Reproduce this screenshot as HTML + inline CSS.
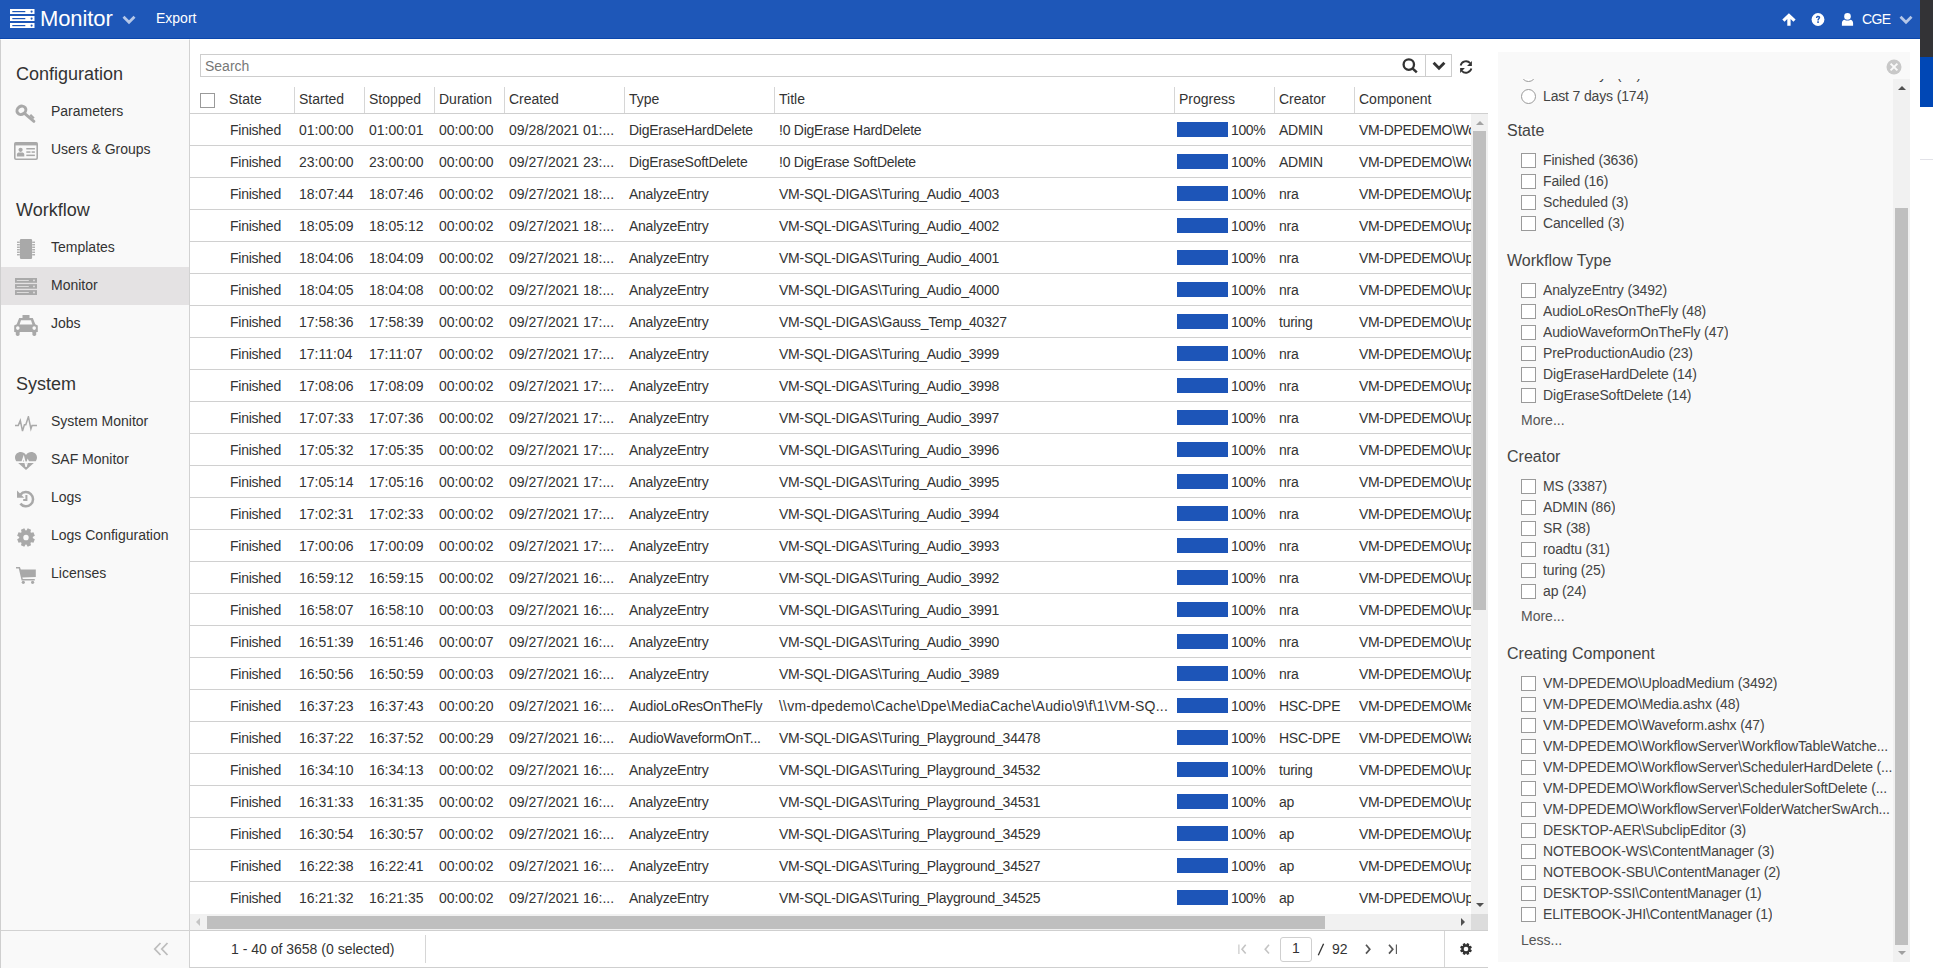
<!DOCTYPE html><html><head><meta charset="utf-8"><title>Monitor</title><style>
*{box-sizing:border-box}
html,body{margin:0;padding:0}
body{width:1933px;height:968px;overflow:hidden;position:relative;background:#fff;font-family:"Liberation Sans",sans-serif;color:#333;font-size:14px}
#hdr{position:absolute;left:0;top:0;width:1920px;height:39px;background:#1e57b8;border-bottom:1px solid #0b47ad}
#hdr .logo{position:absolute;left:10px;top:9px;width:25px;height:20px;line-height:0}
#hdr .apptitle{position:absolute;left:40px;top:7px;font-size:22px;line-height:24px;color:#fff;letter-spacing:-0.1px}
#hdr .appchev{position:absolute;left:122px;top:15px;line-height:0}
#hdr .export{position:absolute;left:156px;top:10px;font-size:14px;line-height:16px;color:#fff}
#hdr .hicon{position:absolute;top:12.5px;line-height:0}
#hdr .cge{position:absolute;left:1862px;top:11px;font-size:14px;line-height:16px;color:#fff;letter-spacing:-0.6px}
#hdr .userchev{position:absolute;left:1899px;top:15px;line-height:0}
#rstrip1{position:absolute;left:1920px;top:0;width:13px;height:57px;background:#333336}
#rstrip2{position:absolute;left:1920px;top:57px;width:13px;height:50px;background:#0047b5}
#rstrip3{position:absolute;left:1920px;top:159px;width:13px;height:1px;background:#e2e2e8}
#side{position:absolute;left:0;top:39px;width:190px;height:929px;background:#f9f9f9;border-left:1px solid #cfcfcf;border-right:1px solid #d2d2d2;border-top:1px solid #fff}
.t{position:absolute;white-space:nowrap}
.sh{color:#333}
.si{color:#333}
.sic{position:absolute;line-height:0}
.sic svg{display:block}
.sel{position:absolute;left:1px;width:188px;height:38px;background:#e4e2e3}
.sfoot{position:absolute;left:1px;top:930px;width:188px;height:1px;background:#d2d2d2}
.collapse{position:absolute;left:153px;top:942px;line-height:0}
#search{position:absolute;left:200px;top:54px;width:1252px;height:23px;border:1px solid #cdcdcd;background:#fff}
#search .ph{position:absolute;left:4px;top:3px;font-size:14px;line-height:16px;color:#777}
#search .sbtn{position:absolute;left:1201px;top:3px;line-height:0}
#search .ddbtn{position:absolute;left:1224px;top:-1px;width:27px;height:23px;border-left:1px solid #cdcdcd;line-height:0;padding:7px 0 0 6px}
#refresh{position:absolute;left:1459px;top:60px;line-height:0}
#thead{position:absolute;left:190px;top:82px;width:1298px;height:32px;border-bottom:1px solid #cfcfcf}
#thead .hcb{position:absolute;left:10px;top:11px;width:15px;height:15px;border:1px solid #9a9a9a;background:#fff}
#thead .hsep{position:absolute;top:5px;width:1px;height:26px;background:#d6d6d6}
#thead .hcell{position:absolute;top:9px;font-size:14px;line-height:16px;color:#333;white-space:nowrap}
#tbody{position:absolute;left:190px;top:114px;width:1281px;height:799px;overflow:hidden}
.tr{position:absolute;left:0;width:1281px;height:32px;border-bottom:1px solid #d0d0d0}
.tr .c{position:absolute;top:1px;line-height:31px;font-size:14px;white-space:nowrap;color:#333}
.tr .pb{position:absolute;left:987px;top:8px;width:51px;height:15px;background:#1d55b8}
#vscroll{position:absolute;left:1471px;top:114px;width:17px;height:800px;background:#f1f1f1}
#vscroll .vthumb{position:absolute;left:2px;top:17px;width:13px;height:479px;background:#bfbfbf}
#vscroll .vup{position:absolute;left:4.5px;top:7px;width:0;height:0;border-left:4px solid transparent;border-right:4px solid transparent;border-bottom:4px solid #a3a3a3}
#vscroll .vdn{position:absolute;left:4.5px;top:789px;width:0;height:0;border-left:4px solid transparent;border-right:4px solid transparent;border-top:4px solid #505050}
#hscroll{position:absolute;left:190px;top:914px;width:1281px;height:16px;background:#f1f1f1}
#hscroll .hthumb{position:absolute;left:17px;top:2px;width:1118px;height:13px;background:#bfbfbf}
#hscroll .hl{position:absolute;left:6px;top:4px;width:0;height:0;border-top:4px solid transparent;border-bottom:4px solid transparent;border-right:4px solid #c4c4c4}
#hscroll .hr{position:absolute;left:1271px;top:4px;width:0;height:0;border-top:4px solid transparent;border-bottom:4px solid transparent;border-left:4px solid #505050}
#corner{position:absolute;left:1471px;top:914px;width:17px;height:16px;background:#dcdcdc}
#foot{position:absolute;left:190px;top:930px;width:1298px;height:38px;border-top:1px solid #cfcfcf;border-bottom:1px solid #cfcfcf;background:#fff}
#foot .cnt{position:absolute;left:41px;top:10px;line-height:16px;font-size:14px;color:#333}
#foot .fsep1{position:absolute;left:235px;top:4px;width:1px;height:28px;background:#d6d6d6}
#foot .pg{position:absolute;left:1047px;top:12px;line-height:0}
#foot .pg2{position:absolute;left:1073px;top:12px;line-height:0}
#foot .pgin{position:absolute;left:1090px;top:6px;width:32px;height:25px;border:1px solid #cfcfcf;border-radius:3px;text-align:center;line-height:21px;font-size:14px;color:#333}
#foot .slash{position:absolute;left:1127px;top:12px;line-height:0}
#foot .tot{position:absolute;left:1142px;top:10px;line-height:16px;font-size:14px;color:#333}
#foot .pg3{position:absolute;left:1174px;top:12px;line-height:0}
#foot .pg4{position:absolute;left:1196px;top:12px;line-height:0}
#foot .fsep2{position:absolute;left:1254px;top:0;width:1px;height:36px;background:#d6d6d6}
#foot .fgear{position:absolute;left:1270px;top:12px;line-height:0}
#panel{position:absolute;left:1498px;top:52px;width:412px;height:910px;background:#f9f9f9}
#panel .pclose{position:absolute;left:387.5px;top:7px;line-height:0}
#panel .pscroll{position:absolute;left:395px;top:27px;width:17px;height:883px;background:#f1f1f1}
#panel .pthumb{position:absolute;left:2px;top:129px;width:13px;height:737px;background:#bfbfbf}
#panel .pup{position:absolute;left:4.5px;top:7px;width:0;height:0;border-left:4px solid transparent;border-right:4px solid transparent;border-bottom:4px solid #505050}
#panel .pdn{position:absolute;left:4.5px;top:872px;width:0;height:0;border-left:4px solid transparent;border-right:4px solid transparent;border-top:4px solid #a0a0a0}
#panel .pclip{position:absolute;left:0;top:27px;width:395px;height:882px;overflow:hidden}
.pclip .radio{position:absolute;left:23px;width:15px;height:15px;border:1px solid #9a9a9a;border-radius:50%;background:#fff;margin-top:-79px}
.pclip .cb{position:absolute;left:23px;width:15px;height:15px;border:1px solid #9a9a9a;background:#fff;margin-top:-79px}
.pclip .ptxt{position:absolute;left:45px;font-size:14px;line-height:16px;white-space:nowrap;color:#444;margin-top:-79px;max-width:350px;overflow:hidden;letter-spacing:-0.15px}
.pclip .ph2{position:absolute;left:9px;font-size:16px;line-height:18px;color:#444;margin-top:-79px}
.pclip .more{position:absolute;left:23px;font-size:14px;line-height:16px;color:#555;margin-top:-79px}

.tr .ls{letter-spacing:-0.25px}
.tr .lsp{letter-spacing:0.2px}
.tr .ls3{letter-spacing:-0.33px}

</style></head><body>
<div id="hdr">
<div class="logo"><svg width="25" height="20" viewBox="0 0 25 20"><g fill="#fff"><rect x="0" y="0" width="24.5" height="5"/><rect x="0" y="7" width="24.5" height="5"/><rect x="0" y="14" width="24.5" height="5"/></g><g fill="#1e57b8"><rect x="2.3" y="2" width="13" height="1.2"/><rect x="2.3" y="9" width="13" height="1.2"/><rect x="2.3" y="16" width="13" height="1.2"/><circle cx="21.6" cy="2.6" r="1.1"/><circle cx="21.6" cy="9.6" r="1.1"/><circle cx="21.6" cy="16.6" r="1.1"/></g></svg></div>
<div class="apptitle">Monitor</div>
<div class="appchev"><svg width="14" height="10" viewBox="0 0 14 10"><path d="M1.5 1.8 L7 7.2 L12.5 1.8" fill="none" stroke="#b5c7e8" stroke-width="2.8"/></svg></div>
<div class="export">Export</div>
<div class="hicon" style="left:1782px"><svg width="14" height="13" viewBox="0 0 14 13"><path d="M6.9 0.2 L13.6 6.6 L11.4 8.7 L8.6 6 L8.6 12.8 L5.3 12.8 L5.3 6 L2.5 8.7 L0.3 6.6 Z" fill="#fff"/></svg></div>
<div class="hicon" style="left:1811px"><svg width="14" height="13" viewBox="0 0 14 13"><circle cx="7" cy="6.5" r="6.4" fill="#fff"/><path d="M4.9 5 C4.9 3.4 6 2.8 7.1 2.8 C8.4 2.8 9.2 3.6 9.2 4.6 C9.2 5.9 7.8 6.1 7.8 7.4 L6.3 7.4 C6.3 5.8 7.6 5.6 7.6 4.7 C7.6 4.3 7.3 4.1 7 4.1 C6.6 4.1 6.4 4.4 6.4 5 Z" fill="#1e57b8"/><rect x="6.2" y="8.3" width="1.7" height="1.6" fill="#1e57b8"/></svg></div>
<div class="hicon" style="left:1841px"><svg width="13" height="13" viewBox="0 0 13 13"><circle cx="6.5" cy="3.4" r="3.3" fill="#fff"/><path d="M0.9 12.8 L0.9 9.9 C0.9 7.9 2.2 6.9 3.6 6.7 C4.4 7.3 5.3 7.6 6.5 7.6 C7.7 7.6 8.6 7.3 9.4 6.7 C10.8 6.9 12.1 7.9 12.1 9.9 L12.1 12.8 Z" fill="#fff"/></svg></div>
<div class="cge">CGE</div>
<div class="userchev"><svg width="14" height="10" viewBox="0 0 14 10"><path d="M1.5 1.8 L7 7.2 L12.5 1.8" fill="none" stroke="#b5c7e8" stroke-width="2.8"/></svg></div>
</div>
<div id="rstrip1"></div><div id="rstrip2"></div><div id="rstrip3"></div>
<div id="side"></div>
<div class="t sh" style="left:16px;top:62.76px;font-size:18px;line-height:22px;">Configuration</div>
<div class="sic" style="left:15px;top:104px;width:21px;height:19px"><svg width="100%" height="100%" viewBox="0 0 21 19"><g fill="none" stroke="#a9a9a9"><ellipse cx="6.4" cy="6.3" rx="4.6" ry="4" transform="rotate(-35 6.4 6.3)" stroke-width="3"/><path d="M9.8 9.6 L18.9 17.4" stroke-width="2.8" stroke-linecap="round"/><path d="M15.2 10.8 L18.8 14.3" stroke-width="2.4"/></g></svg></div>
<div class="t si" style="left:51px;top:102.65px;font-size:14px;line-height:17px;">Parameters</div>
<div class="sic" style="left:14px;top:142px;width:24px;height:18px"><svg width="100%" height="100%" viewBox="0 0 24 18"><rect x="0.8" y="0.8" width="22.4" height="16.4" rx="1.2" fill="none" stroke="#a9a9a9" stroke-width="1.6"/><rect x="0.8" y="0.6" width="22.4" height="2.8" fill="#a9a9a9"/><circle cx="6.6" cy="7.8" r="2.1" fill="#a9a9a9"/><path d="M2.9 14.4 L2.9 12.4 C2.9 11 4.2 10.4 5.1 10.4 L8.1 10.4 C9 10.4 10.3 11 10.3 12.4 L10.3 14.4 Z" fill="#a9a9a9"/><rect x="12.3" y="6" width="8.6" height="1.5" fill="#a9a9a9"/><rect x="12.3" y="9.3" width="4.2" height="1.5" fill="#a9a9a9"/><rect x="17.6" y="9.3" width="3.3" height="1.5" fill="#a9a9a9"/><rect x="12.3" y="12.6" width="8.6" height="1.5" fill="#a9a9a9"/></svg></div>
<div class="t si" style="left:51px;top:140.65px;font-size:14px;line-height:17px;">Users &amp; Groups</div>
<div class="t sh" style="left:16px;top:198.76px;font-size:18px;line-height:22px;">Workflow</div>
<div class="sic" style="left:17px;top:239px;width:18px;height:20px"><svg width="100%" height="100%" viewBox="0 0 18 20"><g fill="#a9a9a9"><rect x="2.9" y="0" width="12.2" height="20" rx="1.2"/><rect x="0" y="2.6" width="2.8" height="1.3"/><rect x="15.2" y="2.6" width="2.8" height="1.3"/><rect x="0" y="5.1" width="2.8" height="1.3"/><rect x="15.2" y="5.1" width="2.8" height="1.3"/><rect x="0" y="7.6" width="2.8" height="1.3"/><rect x="15.2" y="7.6" width="2.8" height="1.3"/><rect x="0" y="10.1" width="2.8" height="1.3"/><rect x="15.2" y="10.1" width="2.8" height="1.3"/><rect x="0" y="12.6" width="2.8" height="1.3"/><rect x="15.2" y="12.6" width="2.8" height="1.3"/><rect x="0" y="15.1" width="2.8" height="1.3"/><rect x="15.2" y="15.1" width="2.8" height="1.3"/></g></svg></div>
<div class="t si" style="left:51px;top:238.65px;font-size:14px;line-height:17px;">Templates</div>
<div class="sel" style="top:267px"></div>
<div class="sic" style="left:15px;top:278px;width:22px;height:17px"><svg width="100%" height="100%" viewBox="0 0 22 17"><g fill="#a9a9a9"><rect x="0" y="0" width="22" height="4.8"/><rect x="0" y="6.1" width="22" height="4.6"/><rect x="0" y="12.1" width="22" height="4.9"/></g><g fill="#e4e2e3"><rect x="1.8" y="2" width="12" height="0.9"/><rect x="1.8" y="8" width="12" height="0.9"/><rect x="1.8" y="14.1" width="12" height="0.9"/><circle cx="19" cy="2.4" r="0.9"/><circle cx="19" cy="8.4" r="0.9"/><circle cx="19" cy="14.5" r="0.9"/></g></svg></div>
<div class="t si" style="left:51px;top:276.65px;font-size:14px;line-height:17px;">Monitor</div>
<div class="sic" style="left:14px;top:315px;width:24px;height:21px"><svg width="100%" height="100%" viewBox="0 0 24 21"><g fill="#a9a9a9"><rect x="8.5" y="0" width="7" height="3.2"/><path d="M5.2 3 L18.8 3 L21.3 9.3 L23.8 10.5 L23.8 17 L0.2 17 L0.2 10.5 L2.7 9.3 Z"/><rect x="1.8" y="15.5" width="3.8" height="5.5" rx="1.7"/><rect x="18.4" y="15.5" width="3.8" height="5.5" rx="1.7"/></g><path d="M7 5.3 L17 5.3 L18.4 9.4 L5.6 9.4 Z" fill="#f9f9f9"/><circle cx="3.8" cy="13.1" r="1.8" fill="#f9f9f9"/><circle cx="20.2" cy="13.1" r="1.8" fill="#f9f9f9"/></svg></div>
<div class="t si" style="left:51px;top:314.65px;font-size:14px;line-height:17px;">Jobs</div>
<div class="t sh" style="left:16px;top:372.76px;font-size:18px;line-height:22px;">System</div>
<div class="sic" style="left:15px;top:416px;width:22px;height:16px"><svg width="100%" height="100%" viewBox="0 0 22 16"><path d="M0 9.4 L3.3 9.4 L5.3 4.5 L7.5 15 L9.4 8.8 L10.8 8.8 L13.4 0.7 L15.9 12.8 L17 9.4 L22 9.4" fill="none" stroke="#a9a9a9" stroke-width="1.5" stroke-linejoin="miter"/></svg></div>
<div class="t si" style="left:51px;top:412.65px;font-size:14px;line-height:17px;">System Monitor</div>
<div class="sic" style="left:15px;top:452px;width:22px;height:18px"><svg width="100%" height="100%" viewBox="0 0 22 18"><path d="M11 3 C9.6 0.8 7.7 0 5.8 0 C2.5 0 0 2.4 0 5.6 C0 7.1 0.6 8.3 1.4 9.5 L20.6 9.5 C21.4 8.3 22 7.1 22 5.6 C22 2.4 19.5 0 16.2 0 C14.3 0 12.4 0.8 11 3 Z" fill="#a9a9a9"/><path d="M3.2 11 L18.8 11 L11 18 Z" fill="#a9a9a9"/><path d="M0.5 10.3 L7 10.3 L8.7 5.2 L11.1 14.8 L12.8 8.4 L13.9 10.3 L21.5 10.3" fill="none" stroke="#f9f9f9" stroke-width="1.4"/></svg></div>
<div class="t si" style="left:51px;top:450.65px;font-size:14px;line-height:17px;">SAF Monitor</div>
<div class="sic" style="left:17px;top:490px;width:18px;height:18px"><svg width="100%" height="100%" viewBox="0 0 18 18"><path d="M3.5 4.6 A7.1 7.1 0 1 1 3.4 13.6" fill="none" stroke="#a9a9a9" stroke-width="2.5"/><path d="M0 0.6 L0 7.8 L7.2 7.8 Z" fill="#a9a9a9"/><path d="M9.4 5 L9.4 10 L6.2 10" fill="none" stroke="#a9a9a9" stroke-width="2"/></svg></div>
<div class="t si" style="left:51px;top:488.65px;font-size:14px;line-height:17px;">Logs</div>
<div class="sic" style="left:17px;top:528px;width:18px;height:19px"><svg width="100%" height="100%" viewBox="0 0 18 18" preserveAspectRatio="none"><polygon points="15.65,9.42 17.83,10.72 16.46,14.03 14.00,13.41 13.41,14.00 14.03,16.46 10.72,17.83 9.42,15.65 8.58,15.65 7.28,17.83 3.97,16.46 4.59,14.00 4.00,13.41 1.54,14.03 0.17,10.72 2.35,9.42 2.35,8.58 0.17,7.28 1.54,3.97 4.00,4.59 4.59,4.00 3.97,1.54 7.28,0.17 8.58,2.35 9.42,2.35 10.72,0.17 14.03,1.54 13.41,4.00 14.00,4.59 16.46,3.97 17.83,7.28 15.65,8.58" fill="#a9a9a9"/><circle cx="9.0" cy="9.0" r="6.48" fill="#a9a9a9"/><circle cx="9.0" cy="9.0" r="2.70" fill="#f9f9f9"/></svg></div>
<div class="t si" style="left:51px;top:526.65px;font-size:14px;line-height:17px;">Logs Configuration</div>
<div class="sic" style="left:16px;top:567px;width:20px;height:17px"><svg width="100%" height="100%" viewBox="0 0 20 17"><g fill="#a9a9a9"><path d="M0 0 L3.9 0 L4.8 2.6 L19.8 2.6 L19.8 10 L6.3 10.6 L6.8 12 L18.8 12 L18.8 13.4 L5.6 13.4 L2.8 1.5 L0 1.5 Z"/><circle cx="7.3" cy="15.3" r="1.6"/><circle cx="16.6" cy="15.3" r="1.6"/></g></svg></div>
<div class="t si" style="left:51px;top:564.65px;font-size:14px;line-height:17px;">Licenses</div>
<div class="sfoot"></div><div class="collapse"><svg width="16" height="14" viewBox="0 0 16 14"><path d="M7.5 1 L1.8 7 L7.5 13 M14.5 1 L8.8 7 L14.5 13" fill="none" stroke="#bdbdbd" stroke-width="1.8"/></svg></div>
<div id="main">
<div id="search"><span class="ph">Search</span><div class="sbtn"><svg width="17" height="17" viewBox="0 0 17 17"><circle cx="6.8" cy="6.6" r="5.2" fill="none" stroke="#333" stroke-width="2.3"/><path d="M10.5 10.4 L14.8 14.4" stroke="#333" stroke-width="2.5"/></svg></div><div class="ddbtn"><svg width="14" height="10" viewBox="0 0 14 10"><path d="M1.6 1.8 L7 7.2 L12.4 1.8" fill="none" stroke="#333" stroke-width="2.9"/></svg></div></div>
<div id="refresh"><svg width="14" height="14" viewBox="0 0 14 14"><path d="M1.6 5.4 A5.6 5.6 0 0 1 11.2 3.2" fill="none" stroke="#333" stroke-width="1.8"/><path d="M12.9 1 L12.9 5.9 L8.1 5.9 Z" fill="#333"/><path d="M12.4 8.6 A5.6 5.6 0 0 1 2.8 10.8" fill="none" stroke="#333" stroke-width="1.8"/><path d="M1.1 13 L1.1 8.1 L5.9 8.1 Z" fill="#333"/></svg></div>
<div id="thead">
<div class="hcb"></div>
<div class="hcell" style="left:39px">State</div>
<div class="hsep" style="left:104px"></div>
<div class="hcell" style="left:109px">Started</div>
<div class="hsep" style="left:174px"></div>
<div class="hcell" style="left:179px">Stopped</div>
<div class="hsep" style="left:244px"></div>
<div class="hcell" style="left:249px">Duration</div>
<div class="hsep" style="left:314px"></div>
<div class="hcell" style="left:319px">Created</div>
<div class="hsep" style="left:434px"></div>
<div class="hcell" style="left:439px">Type</div>
<div class="hsep" style="left:584px"></div>
<div class="hcell" style="left:589px">Title</div>
<div class="hsep" style="left:984px"></div>
<div class="hcell" style="left:989px">Progress</div>
<div class="hsep" style="left:1084px"></div>
<div class="hcell" style="left:1089px">Creator</div>
<div class="hsep" style="left:1164px"></div>
<div class="hcell" style="left:1169px">Component</div>
</div>
<div id="tbody">
<div class="tr" style="top:0px">
<span class="c ls" style="left:40px">Finished</span>
<span class="c" style="left:109px">01:00:00</span>
<span class="c" style="left:179px">01:00:01</span>
<span class="c" style="left:249px">00:00:00</span>
<span class="c" style="left:319px">09/28/2021 01:...</span>
<span class="c ls" style="left:439px">DigEraseHardDelete</span>
<span class="c ls" style="left:589px">!0 DigErase HardDelete</span>
<span class="pb"></span><span class="c" style="left:1041px;letter-spacing:-0.4px">100%</span>
<span class="c ls" style="left:1089px">ADMIN</span>
<span class="c comp ls3" style="left:1169px">VM-DPEDEMO\Wo</span>
</div>
<div class="tr" style="top:32px">
<span class="c ls" style="left:40px">Finished</span>
<span class="c" style="left:109px">23:00:00</span>
<span class="c" style="left:179px">23:00:00</span>
<span class="c" style="left:249px">00:00:00</span>
<span class="c" style="left:319px">09/27/2021 23:...</span>
<span class="c ls" style="left:439px">DigEraseSoftDelete</span>
<span class="c ls" style="left:589px">!0 DigErase SoftDelete</span>
<span class="pb"></span><span class="c" style="left:1041px;letter-spacing:-0.4px">100%</span>
<span class="c ls" style="left:1089px">ADMIN</span>
<span class="c comp ls3" style="left:1169px">VM-DPEDEMO\Wo</span>
</div>
<div class="tr" style="top:64px">
<span class="c ls" style="left:40px">Finished</span>
<span class="c" style="left:109px">18:07:44</span>
<span class="c" style="left:179px">18:07:46</span>
<span class="c" style="left:249px">00:00:02</span>
<span class="c" style="left:319px">09/27/2021 18:...</span>
<span class="c ls" style="left:439px">AnalyzeEntry</span>
<span class="c ls" style="left:589px">VM-SQL-DIGAS\Turing_Audio_4003</span>
<span class="pb"></span><span class="c" style="left:1041px;letter-spacing:-0.4px">100%</span>
<span class="c ls" style="left:1089px">nra</span>
<span class="c comp ls3" style="left:1169px">VM-DPEDEMO\Up</span>
</div>
<div class="tr" style="top:96px">
<span class="c ls" style="left:40px">Finished</span>
<span class="c" style="left:109px">18:05:09</span>
<span class="c" style="left:179px">18:05:12</span>
<span class="c" style="left:249px">00:00:02</span>
<span class="c" style="left:319px">09/27/2021 18:...</span>
<span class="c ls" style="left:439px">AnalyzeEntry</span>
<span class="c ls" style="left:589px">VM-SQL-DIGAS\Turing_Audio_4002</span>
<span class="pb"></span><span class="c" style="left:1041px;letter-spacing:-0.4px">100%</span>
<span class="c ls" style="left:1089px">nra</span>
<span class="c comp ls3" style="left:1169px">VM-DPEDEMO\Up</span>
</div>
<div class="tr" style="top:128px">
<span class="c ls" style="left:40px">Finished</span>
<span class="c" style="left:109px">18:04:06</span>
<span class="c" style="left:179px">18:04:09</span>
<span class="c" style="left:249px">00:00:02</span>
<span class="c" style="left:319px">09/27/2021 18:...</span>
<span class="c ls" style="left:439px">AnalyzeEntry</span>
<span class="c ls" style="left:589px">VM-SQL-DIGAS\Turing_Audio_4001</span>
<span class="pb"></span><span class="c" style="left:1041px;letter-spacing:-0.4px">100%</span>
<span class="c ls" style="left:1089px">nra</span>
<span class="c comp ls3" style="left:1169px">VM-DPEDEMO\Up</span>
</div>
<div class="tr" style="top:160px">
<span class="c ls" style="left:40px">Finished</span>
<span class="c" style="left:109px">18:04:05</span>
<span class="c" style="left:179px">18:04:08</span>
<span class="c" style="left:249px">00:00:02</span>
<span class="c" style="left:319px">09/27/2021 18:...</span>
<span class="c ls" style="left:439px">AnalyzeEntry</span>
<span class="c ls" style="left:589px">VM-SQL-DIGAS\Turing_Audio_4000</span>
<span class="pb"></span><span class="c" style="left:1041px;letter-spacing:-0.4px">100%</span>
<span class="c ls" style="left:1089px">nra</span>
<span class="c comp ls3" style="left:1169px">VM-DPEDEMO\Up</span>
</div>
<div class="tr" style="top:192px">
<span class="c ls" style="left:40px">Finished</span>
<span class="c" style="left:109px">17:58:36</span>
<span class="c" style="left:179px">17:58:39</span>
<span class="c" style="left:249px">00:00:02</span>
<span class="c" style="left:319px">09/27/2021 17:...</span>
<span class="c ls" style="left:439px">AnalyzeEntry</span>
<span class="c ls" style="left:589px">VM-SQL-DIGAS\Gauss_Temp_40327</span>
<span class="pb"></span><span class="c" style="left:1041px;letter-spacing:-0.4px">100%</span>
<span class="c ls" style="left:1089px">turing</span>
<span class="c comp ls3" style="left:1169px">VM-DPEDEMO\Up</span>
</div>
<div class="tr" style="top:224px">
<span class="c ls" style="left:40px">Finished</span>
<span class="c" style="left:109px">17:11:04</span>
<span class="c" style="left:179px">17:11:07</span>
<span class="c" style="left:249px">00:00:02</span>
<span class="c" style="left:319px">09/27/2021 17:...</span>
<span class="c ls" style="left:439px">AnalyzeEntry</span>
<span class="c ls" style="left:589px">VM-SQL-DIGAS\Turing_Audio_3999</span>
<span class="pb"></span><span class="c" style="left:1041px;letter-spacing:-0.4px">100%</span>
<span class="c ls" style="left:1089px">nra</span>
<span class="c comp ls3" style="left:1169px">VM-DPEDEMO\Up</span>
</div>
<div class="tr" style="top:256px">
<span class="c ls" style="left:40px">Finished</span>
<span class="c" style="left:109px">17:08:06</span>
<span class="c" style="left:179px">17:08:09</span>
<span class="c" style="left:249px">00:00:02</span>
<span class="c" style="left:319px">09/27/2021 17:...</span>
<span class="c ls" style="left:439px">AnalyzeEntry</span>
<span class="c ls" style="left:589px">VM-SQL-DIGAS\Turing_Audio_3998</span>
<span class="pb"></span><span class="c" style="left:1041px;letter-spacing:-0.4px">100%</span>
<span class="c ls" style="left:1089px">nra</span>
<span class="c comp ls3" style="left:1169px">VM-DPEDEMO\Up</span>
</div>
<div class="tr" style="top:288px">
<span class="c ls" style="left:40px">Finished</span>
<span class="c" style="left:109px">17:07:33</span>
<span class="c" style="left:179px">17:07:36</span>
<span class="c" style="left:249px">00:00:02</span>
<span class="c" style="left:319px">09/27/2021 17:...</span>
<span class="c ls" style="left:439px">AnalyzeEntry</span>
<span class="c ls" style="left:589px">VM-SQL-DIGAS\Turing_Audio_3997</span>
<span class="pb"></span><span class="c" style="left:1041px;letter-spacing:-0.4px">100%</span>
<span class="c ls" style="left:1089px">nra</span>
<span class="c comp ls3" style="left:1169px">VM-DPEDEMO\Up</span>
</div>
<div class="tr" style="top:320px">
<span class="c ls" style="left:40px">Finished</span>
<span class="c" style="left:109px">17:05:32</span>
<span class="c" style="left:179px">17:05:35</span>
<span class="c" style="left:249px">00:00:02</span>
<span class="c" style="left:319px">09/27/2021 17:...</span>
<span class="c ls" style="left:439px">AnalyzeEntry</span>
<span class="c ls" style="left:589px">VM-SQL-DIGAS\Turing_Audio_3996</span>
<span class="pb"></span><span class="c" style="left:1041px;letter-spacing:-0.4px">100%</span>
<span class="c ls" style="left:1089px">nra</span>
<span class="c comp ls3" style="left:1169px">VM-DPEDEMO\Up</span>
</div>
<div class="tr" style="top:352px">
<span class="c ls" style="left:40px">Finished</span>
<span class="c" style="left:109px">17:05:14</span>
<span class="c" style="left:179px">17:05:16</span>
<span class="c" style="left:249px">00:00:02</span>
<span class="c" style="left:319px">09/27/2021 17:...</span>
<span class="c ls" style="left:439px">AnalyzeEntry</span>
<span class="c ls" style="left:589px">VM-SQL-DIGAS\Turing_Audio_3995</span>
<span class="pb"></span><span class="c" style="left:1041px;letter-spacing:-0.4px">100%</span>
<span class="c ls" style="left:1089px">nra</span>
<span class="c comp ls3" style="left:1169px">VM-DPEDEMO\Up</span>
</div>
<div class="tr" style="top:384px">
<span class="c ls" style="left:40px">Finished</span>
<span class="c" style="left:109px">17:02:31</span>
<span class="c" style="left:179px">17:02:33</span>
<span class="c" style="left:249px">00:00:02</span>
<span class="c" style="left:319px">09/27/2021 17:...</span>
<span class="c ls" style="left:439px">AnalyzeEntry</span>
<span class="c ls" style="left:589px">VM-SQL-DIGAS\Turing_Audio_3994</span>
<span class="pb"></span><span class="c" style="left:1041px;letter-spacing:-0.4px">100%</span>
<span class="c ls" style="left:1089px">nra</span>
<span class="c comp ls3" style="left:1169px">VM-DPEDEMO\Up</span>
</div>
<div class="tr" style="top:416px">
<span class="c ls" style="left:40px">Finished</span>
<span class="c" style="left:109px">17:00:06</span>
<span class="c" style="left:179px">17:00:09</span>
<span class="c" style="left:249px">00:00:02</span>
<span class="c" style="left:319px">09/27/2021 17:...</span>
<span class="c ls" style="left:439px">AnalyzeEntry</span>
<span class="c ls" style="left:589px">VM-SQL-DIGAS\Turing_Audio_3993</span>
<span class="pb"></span><span class="c" style="left:1041px;letter-spacing:-0.4px">100%</span>
<span class="c ls" style="left:1089px">nra</span>
<span class="c comp ls3" style="left:1169px">VM-DPEDEMO\Up</span>
</div>
<div class="tr" style="top:448px">
<span class="c ls" style="left:40px">Finished</span>
<span class="c" style="left:109px">16:59:12</span>
<span class="c" style="left:179px">16:59:15</span>
<span class="c" style="left:249px">00:00:02</span>
<span class="c" style="left:319px">09/27/2021 16:...</span>
<span class="c ls" style="left:439px">AnalyzeEntry</span>
<span class="c ls" style="left:589px">VM-SQL-DIGAS\Turing_Audio_3992</span>
<span class="pb"></span><span class="c" style="left:1041px;letter-spacing:-0.4px">100%</span>
<span class="c ls" style="left:1089px">nra</span>
<span class="c comp ls3" style="left:1169px">VM-DPEDEMO\Up</span>
</div>
<div class="tr" style="top:480px">
<span class="c ls" style="left:40px">Finished</span>
<span class="c" style="left:109px">16:58:07</span>
<span class="c" style="left:179px">16:58:10</span>
<span class="c" style="left:249px">00:00:03</span>
<span class="c" style="left:319px">09/27/2021 16:...</span>
<span class="c ls" style="left:439px">AnalyzeEntry</span>
<span class="c ls" style="left:589px">VM-SQL-DIGAS\Turing_Audio_3991</span>
<span class="pb"></span><span class="c" style="left:1041px;letter-spacing:-0.4px">100%</span>
<span class="c ls" style="left:1089px">nra</span>
<span class="c comp ls3" style="left:1169px">VM-DPEDEMO\Up</span>
</div>
<div class="tr" style="top:512px">
<span class="c ls" style="left:40px">Finished</span>
<span class="c" style="left:109px">16:51:39</span>
<span class="c" style="left:179px">16:51:46</span>
<span class="c" style="left:249px">00:00:07</span>
<span class="c" style="left:319px">09/27/2021 16:...</span>
<span class="c ls" style="left:439px">AnalyzeEntry</span>
<span class="c ls" style="left:589px">VM-SQL-DIGAS\Turing_Audio_3990</span>
<span class="pb"></span><span class="c" style="left:1041px;letter-spacing:-0.4px">100%</span>
<span class="c ls" style="left:1089px">nra</span>
<span class="c comp ls3" style="left:1169px">VM-DPEDEMO\Up</span>
</div>
<div class="tr" style="top:544px">
<span class="c ls" style="left:40px">Finished</span>
<span class="c" style="left:109px">16:50:56</span>
<span class="c" style="left:179px">16:50:59</span>
<span class="c" style="left:249px">00:00:03</span>
<span class="c" style="left:319px">09/27/2021 16:...</span>
<span class="c ls" style="left:439px">AnalyzeEntry</span>
<span class="c ls" style="left:589px">VM-SQL-DIGAS\Turing_Audio_3989</span>
<span class="pb"></span><span class="c" style="left:1041px;letter-spacing:-0.4px">100%</span>
<span class="c ls" style="left:1089px">nra</span>
<span class="c comp ls3" style="left:1169px">VM-DPEDEMO\Up</span>
</div>
<div class="tr" style="top:576px">
<span class="c ls" style="left:40px">Finished</span>
<span class="c" style="left:109px">16:37:23</span>
<span class="c" style="left:179px">16:37:43</span>
<span class="c" style="left:249px">00:00:20</span>
<span class="c" style="left:319px">09/27/2021 16:...</span>
<span class="c ls" style="left:439px">AudioLoResOnTheFly</span>
<span class="c lsp" style="left:589px">\\vm-dpedemo\Cache\Dpe\MediaCache\Audio\9\f\1\VM-SQ...</span>
<span class="pb"></span><span class="c" style="left:1041px;letter-spacing:-0.4px">100%</span>
<span class="c ls" style="left:1089px">HSC-DPE</span>
<span class="c comp ls3" style="left:1169px">VM-DPEDEMO\Me</span>
</div>
<div class="tr" style="top:608px">
<span class="c ls" style="left:40px">Finished</span>
<span class="c" style="left:109px">16:37:22</span>
<span class="c" style="left:179px">16:37:52</span>
<span class="c" style="left:249px">00:00:29</span>
<span class="c" style="left:319px">09/27/2021 16:...</span>
<span class="c ls" style="left:439px">AudioWaveformOnT...</span>
<span class="c ls" style="left:589px">VM-SQL-DIGAS\Turing_Playground_34478</span>
<span class="pb"></span><span class="c" style="left:1041px;letter-spacing:-0.4px">100%</span>
<span class="c ls" style="left:1089px">HSC-DPE</span>
<span class="c comp ls3" style="left:1169px">VM-DPEDEMO\Wa</span>
</div>
<div class="tr" style="top:640px">
<span class="c ls" style="left:40px">Finished</span>
<span class="c" style="left:109px">16:34:10</span>
<span class="c" style="left:179px">16:34:13</span>
<span class="c" style="left:249px">00:00:02</span>
<span class="c" style="left:319px">09/27/2021 16:...</span>
<span class="c ls" style="left:439px">AnalyzeEntry</span>
<span class="c ls" style="left:589px">VM-SQL-DIGAS\Turing_Playground_34532</span>
<span class="pb"></span><span class="c" style="left:1041px;letter-spacing:-0.4px">100%</span>
<span class="c ls" style="left:1089px">turing</span>
<span class="c comp ls3" style="left:1169px">VM-DPEDEMO\Up</span>
</div>
<div class="tr" style="top:672px">
<span class="c ls" style="left:40px">Finished</span>
<span class="c" style="left:109px">16:31:33</span>
<span class="c" style="left:179px">16:31:35</span>
<span class="c" style="left:249px">00:00:02</span>
<span class="c" style="left:319px">09/27/2021 16:...</span>
<span class="c ls" style="left:439px">AnalyzeEntry</span>
<span class="c ls" style="left:589px">VM-SQL-DIGAS\Turing_Playground_34531</span>
<span class="pb"></span><span class="c" style="left:1041px;letter-spacing:-0.4px">100%</span>
<span class="c ls" style="left:1089px">ap</span>
<span class="c comp ls3" style="left:1169px">VM-DPEDEMO\Up</span>
</div>
<div class="tr" style="top:704px">
<span class="c ls" style="left:40px">Finished</span>
<span class="c" style="left:109px">16:30:54</span>
<span class="c" style="left:179px">16:30:57</span>
<span class="c" style="left:249px">00:00:02</span>
<span class="c" style="left:319px">09/27/2021 16:...</span>
<span class="c ls" style="left:439px">AnalyzeEntry</span>
<span class="c ls" style="left:589px">VM-SQL-DIGAS\Turing_Playground_34529</span>
<span class="pb"></span><span class="c" style="left:1041px;letter-spacing:-0.4px">100%</span>
<span class="c ls" style="left:1089px">ap</span>
<span class="c comp ls3" style="left:1169px">VM-DPEDEMO\Up</span>
</div>
<div class="tr" style="top:736px">
<span class="c ls" style="left:40px">Finished</span>
<span class="c" style="left:109px">16:22:38</span>
<span class="c" style="left:179px">16:22:41</span>
<span class="c" style="left:249px">00:00:02</span>
<span class="c" style="left:319px">09/27/2021 16:...</span>
<span class="c ls" style="left:439px">AnalyzeEntry</span>
<span class="c ls" style="left:589px">VM-SQL-DIGAS\Turing_Playground_34527</span>
<span class="pb"></span><span class="c" style="left:1041px;letter-spacing:-0.4px">100%</span>
<span class="c ls" style="left:1089px">ap</span>
<span class="c comp ls3" style="left:1169px">VM-DPEDEMO\Up</span>
</div>
<div class="tr" style="top:768px">
<span class="c ls" style="left:40px">Finished</span>
<span class="c" style="left:109px">16:21:32</span>
<span class="c" style="left:179px">16:21:35</span>
<span class="c" style="left:249px">00:00:02</span>
<span class="c" style="left:319px">09/27/2021 16:...</span>
<span class="c ls" style="left:439px">AnalyzeEntry</span>
<span class="c ls" style="left:589px">VM-SQL-DIGAS\Turing_Playground_34525</span>
<span class="pb"></span><span class="c" style="left:1041px;letter-spacing:-0.4px">100%</span>
<span class="c ls" style="left:1089px">ap</span>
<span class="c comp ls3" style="left:1169px">VM-DPEDEMO\Up</span>
</div>
</div>
<div id="vscroll"><div class="vthumb"></div><div class="vup"></div><div class="vdn"></div></div>
<div id="hscroll"><div class="hthumb"></div><div class="hl"></div><div class="hr"></div></div>
<div id="corner"></div>
<div id="foot"><span class="cnt">1 - 40 of 3658 (0 selected)</span><div class="fsep1"></div>
<div class="pg"><svg width="12" height="12" viewBox="0 0 12 12"><path d="M1.9 1.5 L1.9 11" stroke="#c4c4c4" stroke-width="1.1"/><path d="M8.7 1.8 L5 6.2 L8.7 10.6" fill="none" stroke="#c4c4c4" stroke-width="1.6"/></svg></div>
<div class="pg2"><svg width="8" height="12" viewBox="0 0 8 12"><path d="M6 1.8 L2.2 6.2 L6 10.6" fill="none" stroke="#c4c4c4" stroke-width="1.6"/></svg></div>
<div class="pgin">1</div><span class="slash"><svg width="8" height="13" viewBox="0 0 8 13"><path d="M1.3 12.2 L6.6 0.8" stroke="#333" stroke-width="1.3"/></svg></span><span class="tot">92</span>
<div class="pg3"><svg width="8" height="12" viewBox="0 0 8 12"><path d="M2 1.8 L5.8 6.2 L2 10.6" fill="none" stroke="#555" stroke-width="1.7"/></svg></div>
<div class="pg4"><svg width="12" height="12" viewBox="0 0 12 12"><path d="M10.4 1.5 L10.4 11" stroke="#555" stroke-width="1.1"/><path d="M3 1.8 L6.8 6.2 L3 10.6" fill="none" stroke="#555" stroke-width="1.7"/></svg></div>
<div class="fsep2"></div><div class="fgear"><svg width="12" height="12" viewBox="0 0 12 12" preserveAspectRatio="none"><polygon points="10.43,6.28 11.89,7.15 10.98,9.35 9.33,8.94 8.94,9.33 9.35,10.98 7.15,11.89 6.28,10.43 5.72,10.43 4.85,11.89 2.65,10.98 3.06,9.33 2.67,8.94 1.02,9.35 0.11,7.15 1.57,6.28 1.57,5.72 0.11,4.85 1.02,2.65 2.67,3.06 3.06,2.67 2.65,1.02 4.85,0.11 5.72,1.57 6.28,1.57 7.15,0.11 9.35,1.02 8.94,2.67 9.33,3.06 10.98,2.65 11.89,4.85 10.43,5.72" fill="#333"/><circle cx="6.0" cy="6.0" r="4.32" fill="#333"/><circle cx="6.0" cy="6.0" r="2.3" fill="#fff"/></svg></div>
</div>
</div>
<div id="panel">
<div class="pclose"><svg width="16" height="16" viewBox="0 0 16 16"><circle cx="8" cy="8" r="7.5" fill="#c8c8c8"/><path d="M4.6 4.6 L11.4 11.4 M11.4 4.6 L4.6 11.4" stroke="#f9f9f9" stroke-width="2"/></svg></div>
<div class="pscroll"><div class="pthumb"></div><div class="pup"></div><div class="pdn"></div></div>
<div class="pclip">
<div class="radio" style="top:67px"></div><div class="ptxt" style="top:66px">Last 3 days (38)</div>
<div class="radio" style="top:89px"></div><div class="ptxt" style="top:88px">Last 7 days (174)</div>
<div class="ph2" style="top:122px">State</div>
<div class="cb" style="top:153px"></div><div class="ptxt" style="top:152px">Finished (3636)</div>
<div class="cb" style="top:174px"></div><div class="ptxt" style="top:173px">Failed (16)</div>
<div class="cb" style="top:195px"></div><div class="ptxt" style="top:194px">Scheduled (3)</div>
<div class="cb" style="top:216px"></div><div class="ptxt" style="top:215px">Cancelled (3)</div>
<div class="ph2" style="top:252px">Workflow Type</div>
<div class="cb" style="top:283px"></div><div class="ptxt" style="top:282px">AnalyzeEntry (3492)</div>
<div class="cb" style="top:304px"></div><div class="ptxt" style="top:303px">AudioLoResOnTheFly (48)</div>
<div class="cb" style="top:325px"></div><div class="ptxt" style="top:324px">AudioWaveformOnTheFly (47)</div>
<div class="cb" style="top:346px"></div><div class="ptxt" style="top:345px">PreProductionAudio (23)</div>
<div class="cb" style="top:367px"></div><div class="ptxt" style="top:366px">DigEraseHardDelete (14)</div>
<div class="cb" style="top:388px"></div><div class="ptxt" style="top:387px">DigEraseSoftDelete (14)</div>
<div class="more" style="top:412px">More...</div>
<div class="ph2" style="top:448px">Creator</div>
<div class="cb" style="top:479px"></div><div class="ptxt" style="top:478px">MS (3387)</div>
<div class="cb" style="top:500px"></div><div class="ptxt" style="top:499px">ADMIN (86)</div>
<div class="cb" style="top:521px"></div><div class="ptxt" style="top:520px">SR (38)</div>
<div class="cb" style="top:542px"></div><div class="ptxt" style="top:541px">roadtu (31)</div>
<div class="cb" style="top:563px"></div><div class="ptxt" style="top:562px">turing (25)</div>
<div class="cb" style="top:584px"></div><div class="ptxt" style="top:583px">ap (24)</div>
<div class="more" style="top:608px">More...</div>
<div class="ph2" style="top:645px">Creating Component</div>
<div class="cb" style="top:676px"></div><div class="ptxt" style="top:675px">VM-DPEDEMO\UploadMedium (3492)</div>
<div class="cb" style="top:697px"></div><div class="ptxt" style="top:696px">VM-DPEDEMO\Media.ashx (48)</div>
<div class="cb" style="top:718px"></div><div class="ptxt" style="top:717px">VM-DPEDEMO\Waveform.ashx (47)</div>
<div class="cb" style="top:739px"></div><div class="ptxt" style="top:738px">VM-DPEDEMO\WorkflowServer\WorkflowTableWatche...</div>
<div class="cb" style="top:760px"></div><div class="ptxt" style="top:759px">VM-DPEDEMO\WorkflowServer\SchedulerHardDelete (...</div>
<div class="cb" style="top:781px"></div><div class="ptxt" style="top:780px">VM-DPEDEMO\WorkflowServer\SchedulerSoftDelete (...</div>
<div class="cb" style="top:802px"></div><div class="ptxt" style="top:801px">VM-DPEDEMO\WorkflowServer\FolderWatcherSwArch...</div>
<div class="cb" style="top:823px"></div><div class="ptxt" style="top:822px">DESKTOP-AER\SubclipEditor (3)</div>
<div class="cb" style="top:844px"></div><div class="ptxt" style="top:843px">NOTEBOOK-WS\ContentManager (3)</div>
<div class="cb" style="top:865px"></div><div class="ptxt" style="top:864px">NOTEBOOK-SBU\ContentManager (2)</div>
<div class="cb" style="top:886px"></div><div class="ptxt" style="top:885px">DESKTOP-SSI\ContentManager (1)</div>
<div class="cb" style="top:907px"></div><div class="ptxt" style="top:906px">ELITEBOOK-JHI\ContentManager (1)</div>
<div class="more" style="top:932px">Less...</div>
</div>
</div>
</body></html>
